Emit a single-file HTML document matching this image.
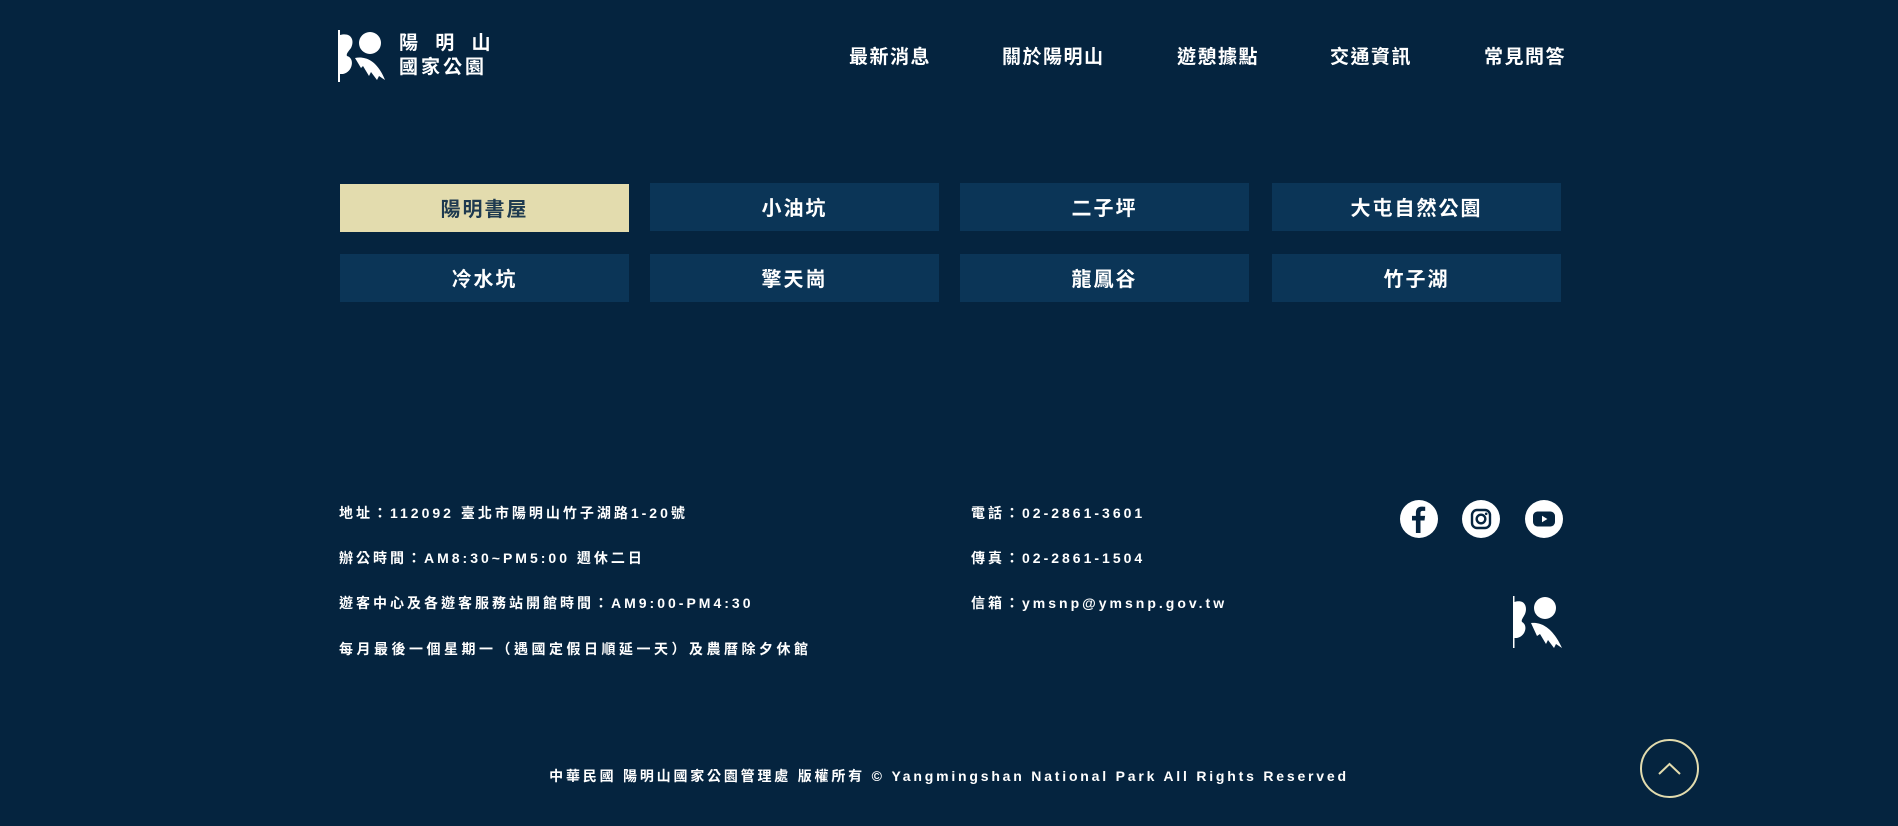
<!DOCTYPE html>
<html><head><meta charset="utf-8"><style>
*{margin:0;padding:0;box-sizing:border-box}
body{width:1898px;height:826px;background:#05243f;font-family:"Liberation Sans","Noto Sans CJK TC",sans-serif;color:#fff;position:relative;overflow:hidden}
.abs{position:absolute}
.nav a{position:absolute;top:42px;font-size:19px;font-weight:bold;letter-spacing:1.5px;color:#fff;white-space:nowrap}
.btn{position:absolute;width:289px;height:48px;background:#0b3557;color:#fff;font-weight:bold;font-size:20px;letter-spacing:2px;text-align:center;line-height:52px}
.btn.on{background:#e3dcae;color:#1e3a4f}
.ft{position:absolute;font-size:14px;letter-spacing:3px;white-space:nowrap;color:#fff;font-weight:bold}
.soc{position:absolute;width:38px;height:38px;border-radius:50%;background:#fff;top:500px}
</style></head><body>
<svg class="abs" style="left:337px;top:30px" width="50" height="52" viewBox="0 0 50 52">
<rect x="1" y="0" width="2" height="52" fill="#fff"/>
<path d="M3 5 C14 2 18 10 14 18 C11 22 9 24 10 26 C18 28 16 42 6 44 L3 44Z" fill="#fff"/>
<circle cx="33" cy="13" r="11" fill="#fff"/>
<path d="M18 28 C28 26 40 30 48 50 L42 46 L40 50 L34 42 L32 46 L26 36 L24 38Z" fill="#fff"/>
</svg>
<div class="abs" style="left:399px;top:32px;font-size:19px;line-height:24px;letter-spacing:6px;font-weight:bold">陽 明 山<br><span style="letter-spacing:3px">國家公園</span></div>
<div class="nav">
<a style="left:849px">最新消息</a>
<a style="left:1002px">關於陽明山</a>
<a style="left:1177px">遊憩據點</a>
<a style="left:1330px">交通資訊</a>
<a style="left:1484px">常見問答</a>
</div>
<div class="btn on" style="left:340px;top:184px">陽明書屋</div>
<div class="btn" style="left:650px;top:183px">小油坑</div>
<div class="btn" style="left:960px;top:183px">二子坪</div>
<div class="btn" style="left:1272px;top:183px">大屯自然公園</div>
<div class="btn" style="left:340px;top:254px">冷水坑</div>
<div class="btn" style="left:650px;top:254px">擎天崗</div>
<div class="btn" style="left:960px;top:254px">龍鳳谷</div>
<div class="btn" style="left:1272px;top:254px">竹子湖</div>

<div class="ft" style="left:339px;top:503px">地址：112092 臺北市陽明山竹子湖路1-20號</div>
<div class="ft" style="left:339px;top:548px">辦公時間：AM8:30~PM5:00 週休二日</div>
<div class="ft" style="left:339px;top:593px">遊客中心及各遊客服務站開館時間：AM9:00-PM4:30</div>
<div class="ft" style="left:339px;top:639px;letter-spacing:3.5px">每月最後一個星期一（遇國定假日順延一天）及農曆除夕休館</div>
<div class="ft" style="left:971px;top:503px">電話：02-2861-3601</div>
<div class="ft" style="left:971px;top:548px">傳真：02-2861-1504</div>
<div class="ft" style="left:971px;top:593px">信箱：ymsnp@ymsnp.gov.tw</div>

<div class="soc" style="left:1400px"><svg width="38" height="38" viewBox="0 0 38 38"><path d="M20.5 33V20.5h4l.6-4.6h-4.6v-2.8c0-1.3.4-2.2 2.3-2.2h2.4V6.8c-.4 0-1.9-.2-3.5-.2-3.4 0-5.8 2.1-5.8 5.9v3.4h-3.9v4.6h3.9V33z" fill="#05243f"/></svg></div>
<div class="soc" style="left:1462px"><svg width="38" height="38" viewBox="0 0 38 38"><rect x="10" y="10" width="18" height="18" rx="5" fill="none" stroke="#05243f" stroke-width="2.4"/><circle cx="19" cy="19" r="4.3" fill="none" stroke="#05243f" stroke-width="2.4"/><circle cx="24.2" cy="13.8" r="1.3" fill="#05243f"/></svg></div>
<div class="soc" style="left:1525px"><svg width="38" height="38" viewBox="0 0 38 38"><rect x="8" y="11.5" width="22" height="15" rx="4.5" fill="#05243f"/><path d="M17 15.8v6.4l5.4-3.2z" fill="#fff"/></svg></div>

<svg class="abs" style="left:1512px;top:596px" width="50" height="52" viewBox="0 0 50 52">
<rect x="1" y="0" width="1.5" height="52" fill="#fff"/>
<path d="M2.5 6 C12 3 16 10 13 18 C11 22 9 24 10 26 C16 29 14 40 5 42 L2.5 42Z" fill="#fff"/>
<circle cx="33" cy="12" r="11" fill="#fff"/>
<path d="M19 27 C28 26 40 30 50 52 L44 48 L42 52 L36 44 L34 48 L28 38 L25 40Z" fill="#fff"/>
</svg>

<div class="ft" style="left:0;width:1898px;text-align:center;top:766px;font-size:14px;letter-spacing:2.8px">中華民國 陽明山國家公園管理處 版權所有 © Yangmingshan National Park All Rights Reserved</div>

<div class="abs" style="left:1640px;top:739px;width:59px;height:59px;border-radius:50%;border:2px solid #e3dcae">
<svg width="55" height="55" viewBox="0 0 55 55"><path d="M17 33 L27.5 23 L38 33" fill="none" stroke="#e3dcae" stroke-width="2"/></svg></div>
</body></html>
